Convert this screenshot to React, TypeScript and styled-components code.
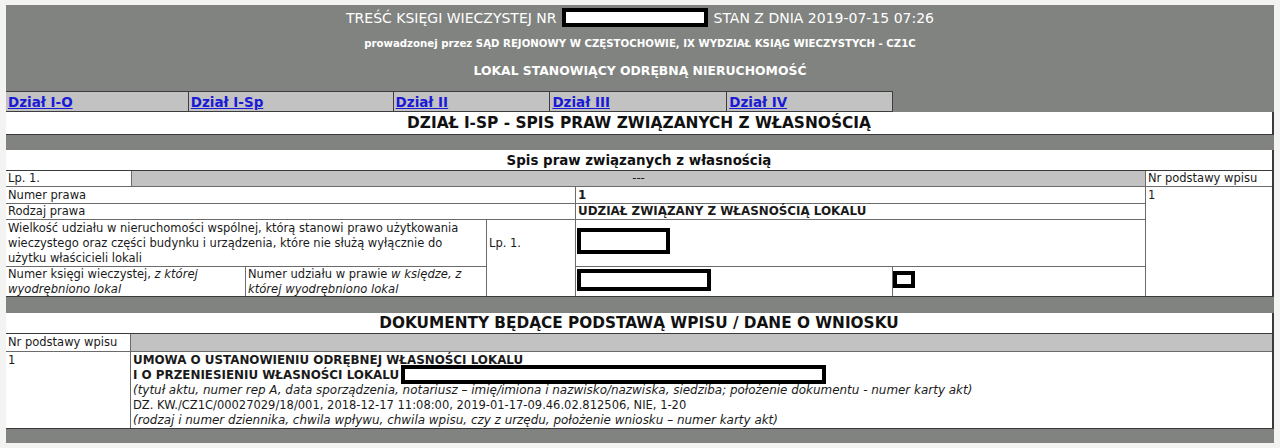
import React from "react";
import styled, { createGlobalStyle } from "styled-components";

const Global = createGlobalStyle`
  html, body { margin: 0; padding: 0; background: #f3f4f2; }
  body { font-family: "DejaVu Sans", Verdana, sans-serif; color: #1a1a1a; }
  * { box-sizing: border-box; }
`;

const Page = styled.div`
  width: 1268px;
  margin: 5px 0 0 6px;
  background: #818380;
  padding-bottom: 14px;
`;

const Header = styled.div`
  display: flex;
  flex-direction: column;
  align-items: center;
  color: #fff;
  padding-bottom: 7px;
`;

const HeaderLine = styled.div<{ $h: number; $size: number; $bold?: boolean }>`
  height: ${(p) => p.$h}px;
  display: flex;
  align-items: center;
  font-size: ${(p) => p.$size}px;
  font-weight: ${(p) => (p.$bold ? 700 : 400)};
  white-space: nowrap;
`;

const Redact = styled.span<{ $w: number; $h: number; $b?: number }>`
  display: inline-block;
  width: ${(p) => p.$w}px;
  height: ${(p) => p.$h}px;
  border: ${(p) => p.$b ?? 4}px solid #000;
  background: #fff;
  flex: none;
`;

const TitleRedact = styled(Redact)`
  margin: 0 6px 0 5px;
`;

const TabBar = styled.div`
  display: flex;
  width: 887px;
  border-top: 1px solid #3d3d3d;
  border-bottom: 1px solid #3d3d3d;
  border-right: 1px solid #3d3d3d;
  background: #c2c2c2;
`;

const Tab = styled.div<{ $w: number }>`
  width: ${(p) => p.$w}px;
  height: 19px;
  border-left: 1px solid #3d3d3d;
  padding-left: 2px;
  display: flex;
  align-items: center;
  &:first-child { border-left: none; }
`;

const TabLink = styled.a`
  color: #1a1ad6;
  font-weight: 700;
  font-size: 13.5px;
  text-decoration: underline;
`;

const SectionTitle = styled.div<{ $h: number; $size: number }>`
  background: #fff;
  height: ${(p) => p.$h}px;
  display: flex;
  align-items: center;
  justify-content: center;
  font-weight: 700;
  font-size: ${(p) => p.$size}px;
  border-bottom: 1px solid #3a3a3a;
  border-right: 2px solid #3a3a3a;
  color: #111;
`;

const Band = styled.div<{ $h: number }>`
  height: ${(p) => p.$h}px;
`;

const DataGrid = styled.div`
  display: grid;
  grid-template-columns: 125px 113px 240px 88px 316px 252px 1fr;
  grid-template-rows: 15px 16px 15px 46px 29px;
  gap: 1px;
  background: #6b6b6b;
  border-right: 2px solid #3a3a3a;
  border-bottom: 1px solid #3a3a3a;
`;

const DocGrid = styled.div`
  display: grid;
  grid-template-columns: 124px 1fr;
  grid-template-rows: 17px 76px;
  gap: 1px;
  background: #6b6b6b;
  border-right: 2px solid #3a3a3a;
  border-bottom: 1px solid #3a3a3a;
`;

const Cell = styled.div<{
  $col: string;
  $row?: string;
  $gray?: boolean;
  $bold?: boolean;
  $center?: boolean;
  $mid?: boolean;
  $pt?: number;
}>`
  grid-column: ${(p) => p.$col};
  grid-row: ${(p) => p.$row ?? "auto"};
  background: ${(p) => (p.$gray ? "#c2c2c2" : "#fff")};
  font-size: ${(p) => (p.$bold ? 11.9 : 11.5)}px;
  line-height: 15px;
  font-weight: ${(p) => (p.$bold ? 700 : 400)};
  padding: ${(p) => p.$pt ?? 0}px 2px 0 2px;
  text-align: ${(p) => (p.$center ? "center" : "left")};
  display: ${(p) => (p.$mid ? "flex" : "block")};
  align-items: center;
  justify-content: ${(p) => (p.$center ? "center" : "flex-start")};
  position: relative;
`;

const BoxCell = styled(Cell)`
  padding: 0;
  display: flex;
  align-items: flex-start;
`;

const Em = styled.em`
  font-style: italic;
  font-size: 11.6px;
  line-height: 14px;
`;

const DocLine = styled.div<{ $bold?: boolean; $italic?: boolean }>`
  font-weight: ${(p) => (p.$bold ? 700 : 400)};
  font-style: ${(p) => (p.$italic ? "italic" : "normal")};
  font-size: ${(p) => (p.$bold ? 11.9 : p.$italic ? 11.95 : 11.5)}px;
  height: 15px;
  white-space: nowrap;
  display: flex;
  align-items: center;
`;

const DocRedact = styled(Redact)`
  position: relative;
  top: -1px;
  margin-left: 2px;
`;

const tabs = [
  { label: "Dział I-O", w: 182 },
  { label: "Dział I-Sp", w: 205 },
  { label: "Dział II", w: 157 },
  { label: "Dział III", w: 177 },
  { label: "Dział IV", w: 166 },
];

export default function App() {
  return (
    <>
      <Global />
      <Page>
        <Header>
          <HeaderLine $h={25} $size={14}>
            TREŚĆ KSIĘGI WIECZYSTEJ NR
            <TitleRedact $w={146} $h={19} />
            STAN Z DNIA 2019-07-15 07:26
          </HeaderLine>
          <HeaderLine $h={27} $size={10.2} $bold>
            prowadzonej przez SĄD REJONOWY W CZĘSTOCHOWIE, IX WYDZIAŁ KSIĄG WIECZYSTYCH - CZ1C
          </HeaderLine>
          <HeaderLine $h={27} $size={12.4} $bold>
            LOKAL STANOWIĄCY ODRĘBNĄ NIERUCHOMOŚĆ
          </HeaderLine>
        </Header>

        <TabBar>
          {tabs.map((t) => (
            <Tab key={t.label} $w={t.w}>
              <TabLink href="#">{t.label}</TabLink>
            </Tab>
          ))}
        </TabBar>

        <SectionTitle $h={23} $size={15.4}>
          DZIAŁ I-SP - SPIS PRAW ZWIĄZANYCH Z WŁASNOŚCIĄ
        </SectionTitle>
        <Band $h={15} />
        <SectionTitle $h={21} $size={13.4}>
          Spis praw związanych z własnością
        </SectionTitle>

        <DataGrid>
          <Cell $col="1" $row="1" $mid>Lp. 1.</Cell>
          <Cell $col="2 / 7" $row="1" $gray $center $mid>---</Cell>
          <Cell $col="7" $row="1" $mid>Nr podstawy wpisu</Cell>

          <Cell $col="1 / 5" $row="2" $mid>Numer prawa</Cell>
          <Cell $col="5 / 7" $row="2" $bold $mid>1</Cell>
          <Cell $col="7" $row="2 / 6" $pt={1}>1</Cell>

          <Cell $col="1 / 5" $row="3" $mid>Rodzaj prawa</Cell>
          <Cell $col="5 / 7" $row="3" $bold $mid>UDZIAŁ ZWIĄZANY Z WŁASNOŚCIĄ LOKALU</Cell>

          <Cell $col="1 / 4" $row="4" $pt={1}>
            Wielkość udziału w nieruchomości wspólnej, którą stanowi prawo użytkowania
            wieczystego oraz części budynku i urządzenia, które nie służą wyłącznie do
            użytku właścicieli lokali
          </Cell>
          <Cell $col="4" $row="4 / 6" $pt={16}>Lp. 1.</Cell>
          <BoxCell $col="5 / 7" $row="4">
            <Redact $w={93} $h={26} style={{ marginTop: 8, marginLeft: 1 }} />
          </BoxCell>

          <Cell $col="1 / 3" $row="5" $pt={0}>
            Numer księgi wieczystej, <Em>z której wyodrębniono lokal</Em>
          </Cell>
          <Cell $col="3" $row="5" $pt={0}>
            Numer udziału w prawie <Em>w księdze, z której wyodrębniono lokal</Em>
          </Cell>
          <BoxCell $col="5" $row="5">
            <Redact $w={134} $h={22} style={{ marginTop: 2, marginLeft: 1 }} />
          </BoxCell>
          <BoxCell $col="6" $row="5">
            <Redact $w={22} $h={17} style={{ marginTop: 4 }} />
          </BoxCell>
        </DataGrid>

        <Band $h={16} />
        <SectionTitle $h={21} $size={15.3}>
          DOKUMENTY BĘDĄCE PODSTAWĄ WPISU / DANE O WNIOSKU
        </SectionTitle>

        <DocGrid>
          <Cell $col="1" $row="1" $mid>Nr podstawy wpisu</Cell>
          <Cell $col="2" $row="1" $gray />
          <Cell $col="1" $row="2" $pt={1}>1</Cell>
          <Cell $col="2" $row="2" $pt={1}>
            <DocLine $bold>UMOWA O USTANOWIENIU ODRĘBNEJ WŁASNOŚCI LOKALU</DocLine>
            <DocLine $bold>
              I O PRZENIESIENIU WŁASNOŚCI LOKALU
              <DocRedact $w={425} $h={19} />
            </DocLine>
            <DocLine $italic>
              (tytuł aktu, numer rep A, data sporządzenia, notariusz – imię/imiona i nazwisko/nazwiska, siedziba; położenie dokumentu - numer karty akt)
            </DocLine>
            <DocLine>
              DZ. KW./CZ1C/00027029/18/001, 2018-12-17 11:08:00, 2019-01-17-09.46.02.812506, NIE, 1-20
            </DocLine>
            <DocLine $italic>
              (rodzaj i numer dziennika, chwila wpływu, chwila wpisu, czy z urzędu, położenie wniosku – numer karty akt)
            </DocLine>
          </Cell>
        </DocGrid>
      </Page>
    </>
  );
}
